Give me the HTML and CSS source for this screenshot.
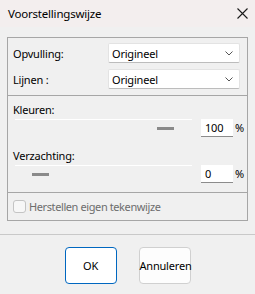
FILE: index.html
```html
<!DOCTYPE html>
<html lang="nl">
<head>
  <meta charset="UTF-8" />
  <title>Voorstellingswijze</title>
  <link rel="stylesheet" href="styles.css">
</head>
<body>
  <div class="dialog">
    <!-- Title bar -->
    <div class="titlebar">
      <span class="title">Voorstellingswijze</span>
      <svg class="close" width="11" height="11" viewBox="0 0 11 11">
        <path d="M0.5 0.5 L10.5 10.5 M10.5 0.5 L0.5 10.5" stroke="#1a1a1a" stroke-width="1.1" fill="none"/>
      </svg>
    </div>

    <div class="main">
      <div class="group">
        <!-- Fill and lines -->
        <div class="section sec-combos">
          <div class="row">
            <span class="label">Opvulling:</span>
            <div class="combo"><span>Origineel</span><svg width="8" height="5" viewBox="0 0 8 5"><path d="M0.5 0.5 L4 4 L7.5 0.5" stroke="#555" fill="none"/></svg></div>
          </div>
          <div class="row">
            <span class="label">Lijnen :</span>
            <div class="combo"><span>Origineel</span><svg width="8" height="5" viewBox="0 0 8 5"><path d="M0.5 0.5 L4 4 L7.5 0.5" stroke="#555" fill="none"/></svg></div>
          </div>
        </div>

        <!-- Sliders -->
        <div class="section sec-sliders">
          <div class="slider-label">Kleuren:</div>
          <div class="slider-row">
            <div class="track"><div class="thumb" style="left: 142px"></div></div>
            <div class="num">100</div>
            <span class="pct">%</span>
          </div>
          <div class="slider-label second">Verzachting:</div>
          <div class="slider-row">
            <div class="track"><div class="thumb" style="left: 17px"></div></div>
            <div class="num">0</div>
            <span class="pct">%</span>
          </div>
        </div>

        <!-- Restore -->
        <div class="section sec-check">
          <span class="checkbox"></span>
          <span class="check-text">Herstellen eigen tekenwijze</span>
        </div>
      </div>
    </div>

    <div class="footer">
      <button class="btn primary">OK</button>
      <button class="btn">Annuleren</button>
    </div>
  </div>
</body>
</html>
```

FILE: styles.css
```css
* { box-sizing: border-box; }

body {
  margin: 0;
  font-family: "Noto Sans", sans-serif;
  font-size: 11px;
  letter-spacing: -0.2px;
  color: #000;
  background: #f0f0f0;
}

.dialog {
  width: 255px;
  height: 294px;
  overflow: hidden;
}

.titlebar {
  height: 27px;
  background: #f3eeee;
  display: flex;
  align-items: center;
  justify-content: space-between;
  padding: 0 7px 0 8px;
}

.title {
  font-size: 11.5px;
}

.main {
  padding: 10px 7px 0 7px;
}

.group {
  border: 1px solid #a6a6a6;
}

.section + .section {
  border-top: 1px solid #a6a6a6;
}

/* combos */
.sec-combos {
  padding: 5px 7px 6px 5px;
  display: flex;
  flex-direction: column;
  gap: 6px;
}

.row {
  display: flex;
  align-items: center;
  height: 20px;
}

.label {
  width: 95px;
}

.combo {
  width: 132px;
  height: 20px;
  background: #fff;
  border: 1px solid #e3e3e3;
  border-bottom-color: #bcbcbc;
  border-radius: 2px;
  display: flex;
  align-items: center;
  justify-content: space-between;
  padding: 0 6px 0 3px;
}

/* sliders */
.sec-sliders {
  padding: 6px 0 9px 5px;
}

.slider-label {
  height: 16px;
  line-height: 16px;
}

.slider-label.second {
  margin-top: 11px;
}

.slider-row {
  display: flex;
  align-items: flex-start;
  height: 18px;
  margin-top: 1px;
}

.track {
  position: relative;
  width: 177px;
  height: 18px;
  margin-left: 2px;
  border-top: 1px solid #fff;
}

.thumb {
  position: absolute;
  top: 7px;
  width: 17px;
  height: 3px;
  background: #8a8a8a;
}

.num {
  width: 32px;
  height: 18px;
  margin-left: 9px;
  background: #fff;
  border-bottom: 1px solid #8c8c8c;
  padding-left: 4px;
  line-height: 17px;
}

.pct {
  margin-left: 2px;
  line-height: 18px;
}

/* checkbox */
.sec-check {
  height: 28px;
  display: flex;
  align-items: center;
  padding-left: 5px;
}

.checkbox {
  width: 13px;
  height: 13px;
  border: 1px solid #c4c4c4;
  border-radius: 3px;
  background: #f7f7f7;
}

.check-text {
  margin-left: 3px;
  letter-spacing: -0.4px;
  color: #6d6d6d;
}

/* footer */
.footer {
  margin-top: 13px;
  border-top: 1px solid #c9c9c9;
  padding-top: 12px;
  display: flex;
  justify-content: center;
  gap: 22px;
}

.btn {
  width: 52px;
  height: 37px;
  padding: 0;
  font-family: "Noto Sans", sans-serif;
  font-size: 11px;
  letter-spacing: -0.2px;
  color: #000;
  background: #fdfdfd;
  border: 1px solid #d0d0d0;
  border-radius: 4px;
}

.btn.primary {
  background: #fff;
  border-color: #0067c0;
}
```
